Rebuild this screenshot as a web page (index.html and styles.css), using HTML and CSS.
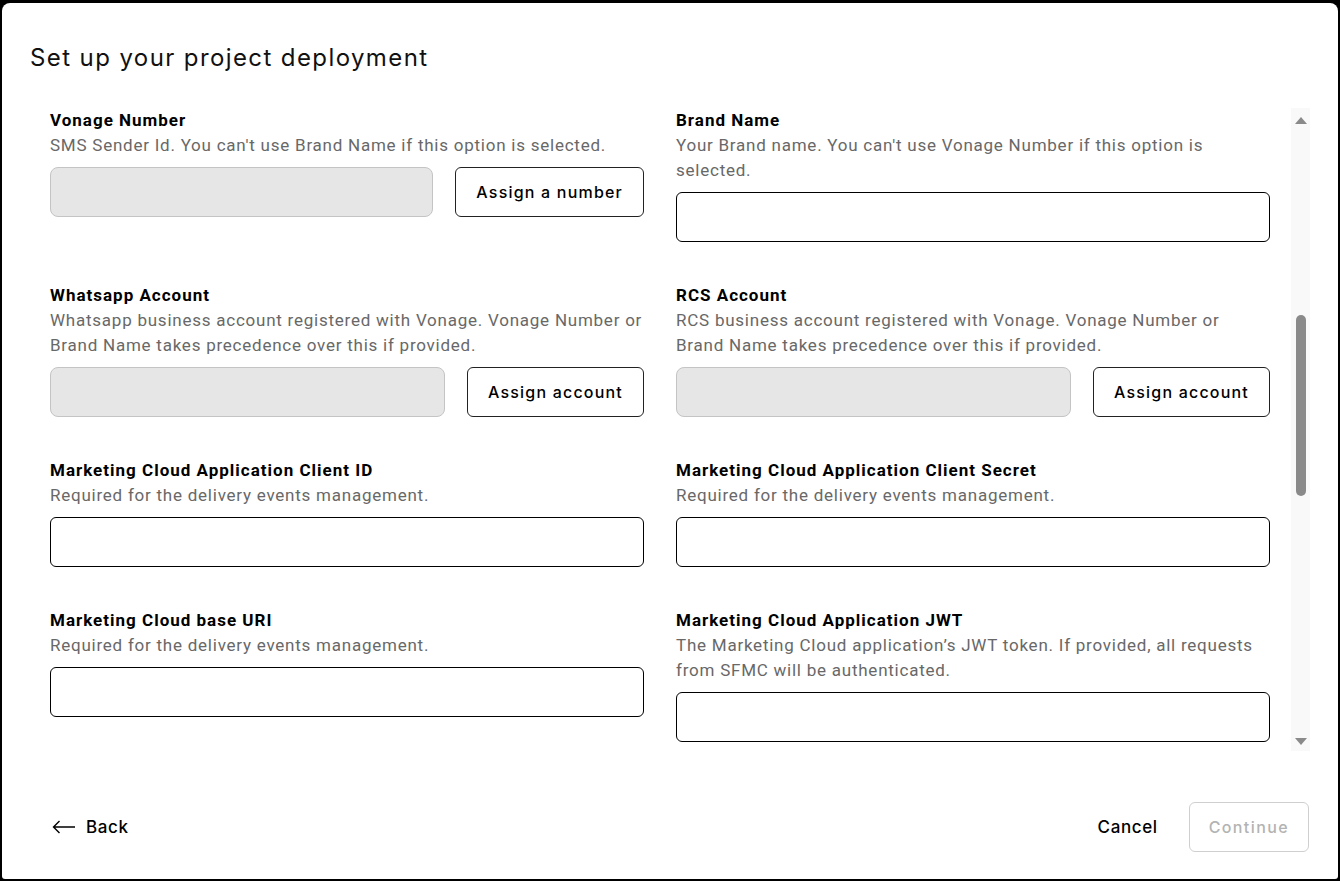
FILE: index.html
```html
<!DOCTYPE html>
<html lang="en">
<head>
    <meta charset="UTF-8">
    <meta name="viewport" content="width=device-width, initial-scale=1.0">
    <title>Set up your project deployment</title>
    <link rel="stylesheet" href="styles.css">
</head>
<body>
    <div class="modal">
        <div class="modal-header">
            <h1>Set up your project deployment</h1>
        </div>

        <div class="modal-body">
            <form class="fields" id="deployForm">
                <div class="field">
                    <label for="vonageNumber">Vonage Number</label>
                    <p class="hint">SMS Sender Id. You can't use Brand Name if this option is selected.</p>
                    <div class="with-action">
                        <input type="text" id="vonageNumber" disabled>
                        <button type="button" class="btn">Assign a number</button>
                    </div>
                </div>

                <div class="field">
                    <label for="brandName">Brand Name</label>
                    <p class="hint">Your Brand name. You can't use Vonage Number if this option is selected.</p>
                    <input type="text" id="brandName">
                </div>

                <div class="field">
                    <label for="whatsapp">Whatsapp Account</label>
                    <p class="hint">Whatsapp business account registered with Vonage. Vonage Number or Brand Name takes precedence over this if provided.</p>
                    <div class="with-action">
                        <input type="text" id="whatsapp" disabled>
                        <button type="button" class="btn">Assign account</button>
                    </div>
                </div>

                <div class="field">
                    <label for="rcs">RCS Account</label>
                    <p class="hint">RCS business account registered with Vonage. Vonage Number or Brand Name takes precedence over this if provided.</p>
                    <div class="with-action">
                        <input type="text" id="rcs" disabled>
                        <button type="button" class="btn">Assign account</button>
                    </div>
                </div>

                <div class="field">
                    <label for="clientId">Marketing Cloud Application Client ID</label>
                    <p class="hint">Required for the delivery events management.</p>
                    <input type="text" id="clientId">
                </div>

                <div class="field">
                    <label for="clientSecret">Marketing Cloud Application Client Secret</label>
                    <p class="hint">Required for the delivery events management.</p>
                    <input type="text" id="clientSecret">
                </div>

                <div class="field">
                    <label for="baseUri">Marketing Cloud base URI</label>
                    <p class="hint">Required for the delivery events management.</p>
                    <input type="text" id="baseUri">
                </div>

                <div class="field">
                    <label for="jwt">Marketing Cloud Application JWT</label>
                    <p class="hint">The Marketing Cloud application’s JWT token. If provided, all requests from SFMC will be authenticated.</p>
                    <input type="text" id="jwt">
                </div>
            </form>

            <div class="scrollbar">
                <span class="arrow-up"></span>
                <div class="track">
                    <div class="thumb"></div>
                </div>
                <span class="arrow-down"></span>
            </div>
        </div>

        <div class="modal-footer">
            <a href="#" class="back">
                <svg width="24" height="14" viewBox="0 0 24 14" fill="none" stroke="#000" stroke-width="1.4">
                    <path d="M23 7H1.5M7.5 1L1.5 7l6 6"/>
                </svg>
                Back
            </a>
            <div class="actions">
                <a href="#" class="cancel">Cancel</a>
                <button type="button" class="btn btn-disabled" disabled>Continue</button>
            </div>
        </div>
    </div>
</body>
</html>
```

FILE: styles.css
```css
body {
    margin: 0;
    background-color: #000;
    font-family: Roboto, "Liberation Sans", sans-serif;
}

.modal {
    margin: 3px 2px 2px 2px;
    height: 876px;
    background-color: #fff;
    border-radius: 8px 8px 3px 3px;
    display: flex;
    flex-direction: column;
}

.modal-header {
    padding: 39px 28px 0 28px;
}

h1 {
    margin: 0;
    font-family: Inter, sans-serif;
    font-size: 24px;
    font-weight: 400;
    line-height: 32px;
    letter-spacing: 1.4px;
    color: #111;
}

.modal-body {
    flex: 1;
    margin-top: 34px;
    padding: 0 28px 0 48px;
    display: flex;
    gap: 21px;
    overflow: hidden;
}

.fields {
    width: 1220px;
    display: grid;
    grid-template-columns: 1fr 1fr;
    column-gap: 32px;
    row-gap: 41px;
    align-items: start;
    align-content: start;
}

label {
    display: block;
    font-size: 17px;
    font-weight: 700;
    line-height: 25px;
    letter-spacing: 1px;
    color: #000;
}

.hint {
    margin: 0;
    font-size: 17px;
    line-height: 25px;
    letter-spacing: 0.76px;
    color: #686868;
}

input {
    display: block;
    width: 100%;
    height: 50px;
    margin-top: 9px;
    box-sizing: border-box;
    border: 1px solid #000;
    border-radius: 6px;
    background-color: #fff;
    font-size: 16px;
    padding: 0 12px;
}

input:disabled {
    background-color: #e6e6e6;
    border-color: #c4c4c4;
    border-radius: 8px;
}

.with-action {
    display: flex;
    gap: 22px;
    margin-top: 9px;
}

.with-action input {
    flex: 1;
    margin-top: 0;
}

.btn {
    height: 50px;
    padding: 0 20px;
    background-color: #fff;
    border: 1px solid #222;
    border-radius: 6px;
    font-family: Inter, sans-serif;
    font-size: 16px;
    font-weight: 500;
    letter-spacing: 1.2px;
    color: #000;
    cursor: pointer;
    white-space: nowrap;
}

.btn-disabled {
    border-color: #cfcfcf;
    color: #b3b3b3;
    cursor: default;
}

/* scroll column on the right of the form */
.scrollbar {
    width: 19px;
    height: 643px;
    background-color: #f9f9f9;
    display: flex;
    flex-direction: column;
    align-items: center;
}

.arrow-up,
.arrow-down {
    width: 0;
    height: 0;
    border-left: 6px solid transparent;
    border-right: 6px solid transparent;
}

.arrow-up {
    margin-top: 9px;
    border-bottom: 7px solid #8a8a8a;
}

.arrow-down {
    margin-bottom: 6px;
    border-top: 7px solid #8a8a8a;
}

.track {
    flex: 1;
    width: 100%;
    display: flex;
    justify-content: center;
}

.thumb {
    width: 10px;
    height: 181px;
    margin-top: 191px;
    background-color: #8a8a8a;
    border-radius: 5px;
}

.modal-footer {
    height: 50px;
    padding: 51px 29px 27px 50px;
    display: flex;
    align-items: center;
    justify-content: space-between;
}

.back {
    display: flex;
    align-items: center;
    gap: 10px;
    font-family: Inter, sans-serif;
    font-size: 17px;
    font-weight: 500;
    letter-spacing: 0.6px;
    color: #000;
    text-decoration: none;
}

.actions {
    display: flex;
    align-items: center;
    gap: 31px;
}

.cancel {
    font-family: Inter, sans-serif;
    font-size: 17px;
    font-weight: 500;
    letter-spacing: 0.6px;
    color: #000;
    text-decoration: none;
}

.actions .btn {
    padding: 0 19px;
    letter-spacing: 1.4px;
}
```
